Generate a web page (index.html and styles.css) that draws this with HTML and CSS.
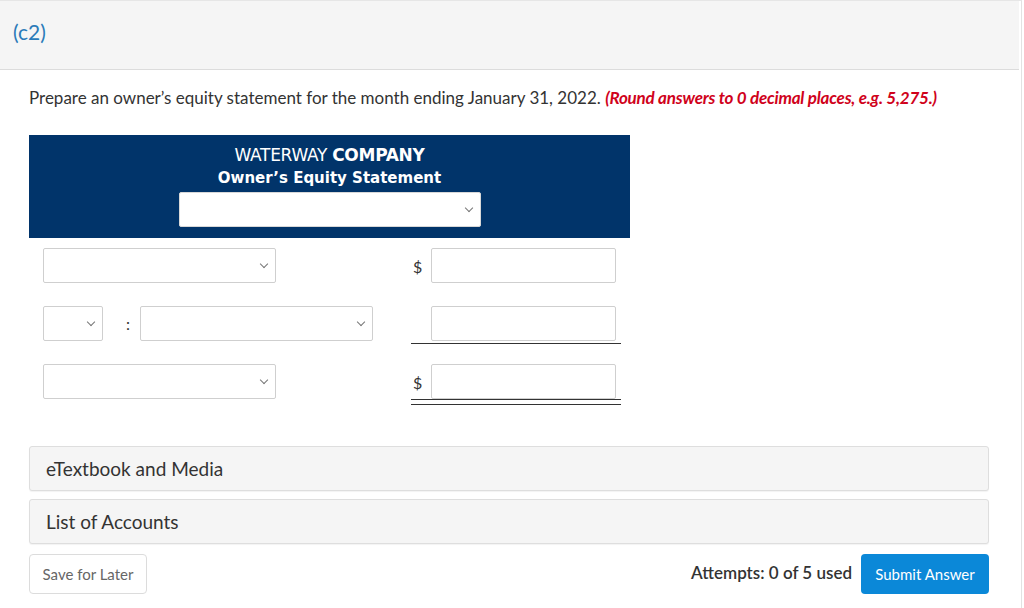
FILE: index.html
```html
<!DOCTYPE html>
<html>
<head>
<meta charset="utf-8">
<link rel="stylesheet" href="styles.css">
</head>
<body>
<div class="page">
  <div class="part-head">(c2)</div>
  <div class="content">
    <p class="prompt">Prepare an owner’s equity statement for the month ending January 31, 2022. <em class="hint">(Round answers to 0 decimal places, e.g. 5,275.)</em></p>

    <div class="statement">
      <div class="st-head">
        <div class="st-title">WATERWAY <b>COMPANY</b></div>
        <div class="st-sub">Owner’s Equity Statement</div>
        <div class="sel sel-head"><span class="chev"></span></div>
      </div>

      <div class="row">
        <div class="left"><div class="sel sel-wide"><span class="chev"></span></div></div>
        <div class="cur">$</div>
        <div class="amt"><div class="inp"></div></div>
      </div>

      <div class="row">
        <div class="left">
          <div class="sel sel-small"><span class="chev"></span></div>
          <span class="colon">:</span>
          <div class="sel sel-wide"><span class="chev"></span></div>
        </div>
        <div class="cur"></div>
        <div class="amt under"><div class="inp"></div></div>
      </div>

      <div class="row">
        <div class="left"><div class="sel sel-wide"><span class="chev"></span></div></div>
        <div class="cur">$</div>
        <div class="amt double"><div class="inp"></div></div>
      </div>
    </div>

    <div class="panel">eTextbook and Media</div>
    <div class="panel">List of Accounts</div>

    <div class="actions">
      <button class="btn-save">Save for Later</button>
      <div class="right">
        <span class="attempts">Attempts: 0 of 5 used</span>
        <button class="btn-submit">Submit Answer</button>
      </div>
    </div>
  </div>
</div>
</body>
</html>
```

FILE: styles.css
```css
* { box-sizing: border-box; }
html, body { margin: 0; padding: 0; background: #fff; }
body { font-family: Lato, "Open Sans", sans-serif; color: #333; }

.page {
  width: 1022px;
  height: 608px;
  border-right: 1px solid #e2e2e2;
  border-top: 1px solid #e6e6e6;
  overflow: hidden;
}

.part-head {
  height: 69px;
  background: #f5f5f5;
  border-bottom: 1px solid #dcdcdc;
  color: #2b7bb9;
  font-size: 21px;
  padding: 18px 0 0 13px;
  line-height: 26px;
  margin-right: 2px;
}

.content { padding: 0 33px 0 29px; }

.prompt {
  margin: 17px 0 0 0;
  font-size: 17px;
  line-height: 22px;
  color: #333;
}
.hint {
  color: #d0021b;
  font-weight: bold;
  font-style: italic;
  letter-spacing: -0.2px;
}

.statement { width: 601px; margin-top: 26px; }

.st-head {
  background: #01346a;
  color: #fff;
  height: 103px;
  display: flex;
  flex-direction: column;
  align-items: center;
  padding-top: 10px;
  font-family: "DejaVu Sans", Verdana, sans-serif;
}
.st-title { line-height: 21px; font-size: 17px; letter-spacing: -0.3px; }
.st-sub { font-weight: bold; line-height: 20px; margin-top: 2px; font-size: 15px; }

.sel {
  position: relative;
  background: #fff;
  border: 1px solid #cfcfcf;
  border-radius: 2px;
  height: 35px;
}
.chev {
  position: absolute;
  right: 8px;
  top: 12px;
  width: 6px;
  height: 6px;
  border-right: 1px solid #777;
  border-bottom: 1px solid #777;
  transform: rotate(45deg);
}
.sel-head { width: 302px; height: 35px; margin-top: 4px; border-color: #d8d8d8; }
.sel-wide { width: 233px; }
.sel-small { width: 60px; }

.row {
  display: flex;
  align-items: center;
  padding-left: 14px;
}
.st-head + .row { margin-top: 10px; height: 35px; }
.row + .row { margin-top: 23px; height: 35px; }

.left {
  width: 370px;
  display: flex;
  align-items: center;
}
.colon { width: 37px; padding-left: 23px; font-size: 16px; color: #333; }

.cur {
  width: 18px;
  text-align: left;
  font-size: 16px;
  color: #333;
  margin-top: 2px;
}

.amt {
  position: relative;
}
.inp {
  width: 185px;
  height: 35px;
  border: 1px solid #cfcfcf;
  border-radius: 2px;
  background: #fff;
}
.amt.under::after {
  content: "";
  position: absolute;
  left: -20px;
  right: -5px;
  bottom: -3px;
  border-bottom: 1px solid #333;
}
.amt.double::after {
  content: "";
  position: absolute;
  left: -20px;
  right: -5px;
  bottom: -6px;
  height: 4px;
  border-top: 1px solid #333;
  border-bottom: 1px solid #333;
}

.panel {
  width: 960px;
  height: 45px;
  background: #f5f5f5;
  border: 1px solid #dedede;
  border-radius: 3px;
  box-shadow: 0 1px 1px rgba(0,0,0,0.05);
  font-size: 19px;
  line-height: 43px;
  padding-left: 16px;
  color: #333;
}
.statement + .panel { margin-top: 47px; }
.panel + .panel { margin-top: 8px; }

.actions {
  width: 960px;
  display: flex;
  justify-content: space-between;
  align-items: center;
  margin-top: 10px;
}
.btn-save {
  font-family: Lato, sans-serif;
  background: #fff;
  border: 1px solid #dcdcdc;
  border-radius: 4px;
  height: 40px;
  width: 118px;
  font-size: 15px;
  color: #666;
  padding: 0;
}
.right { display: flex; align-items: center; }
.attempts { font-size: 17px; font-weight: 600; color: #333; margin-right: 9px; margin-top: -4px; }
.btn-submit {
  font-family: Lato, sans-serif;
  background: #0b88d8;
  color: #fff;
  border: none;
  border-radius: 4px;
  height: 40px;
  width: 128px;
  font-size: 15px;
  padding: 0;
}
```
